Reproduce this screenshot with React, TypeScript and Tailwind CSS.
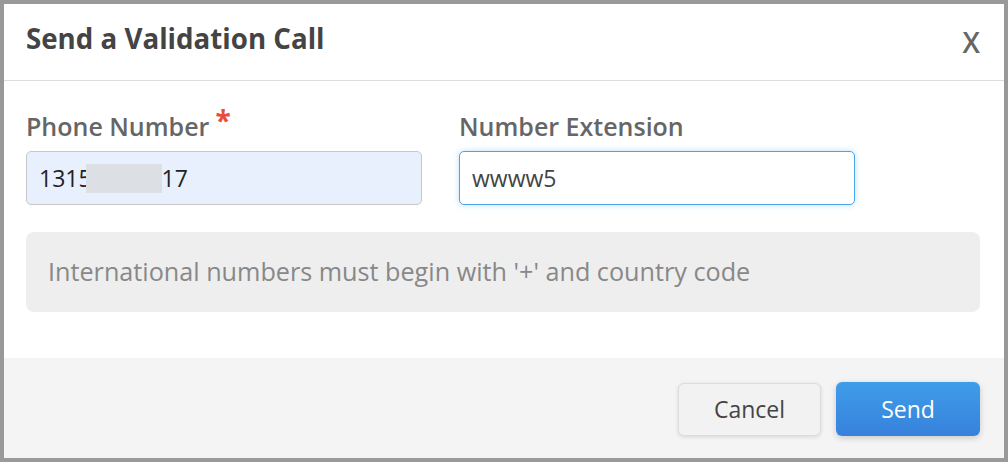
export default function App() {
  const font = { fontFamily: '"Open Sans", "Noto Sans", sans-serif' };
  return (
    <div className="w-[1008px] h-[462px] border-4 border-[#999] bg-white flex flex-col" style={font}>
      <div className="h-[77px] shrink-0 border-b border-[#ddd] flex items-center justify-between pl-[22px] pr-[24px] pb-[6px]">
        <div className="text-[27.7px] font-bold text-[#444] leading-none">Send a Validation Call</div>
        <div className="text-[28px] font-semibold text-[#666] leading-none pt-[6px]">X</div>
      </div>
      <div className="flex-1 bg-white pl-[22px] pr-[24px] pt-[28px]">
        <div className="flex gap-[37px]">
          <div className="w-[396px]">
            <div className="h-[40px] flex items-start text-[25px] font-semibold text-[#666] leading-[34px]">
              Phone Number<span className="text-[#e74c3c] text-[28px] font-bold ml-[6px] leading-[22px]">*</span>
            </div>
            <div className="mt-[2px] h-[54px] rounded-[5px] border border-[#c8c8c8] bg-[#e8f0fe] flex items-center pl-[12px] text-[23px] text-[#222]">
              <span>1315</span>
              <span className="inline-block w-[76px] h-[29px] bg-[#dcdfe4] -ml-[6px]"></span>
              <span>17</span>
            </div>
          </div>
          <div className="w-[396px]">
            <div className="h-[40px] text-[25px] font-semibold text-[#666] leading-[34px]">Number Extension</div>
            <div className="mt-[2px] h-[54px] rounded-[5px] border border-[#4aa3e8] bg-white flex items-center pl-[12px] text-[23px] text-[#444] shadow-[0_0_6px_rgba(74,163,232,0.35)]">
              wwww5
            </div>
          </div>
        </div>
        <div className="mt-[27px] h-[80px] rounded-[8px] bg-[#eeeeee] flex items-center pl-[22px] text-[25.2px] text-[#888]">
          International numbers must begin with '+' and country code
        </div>
      </div>
      <div className="h-[100px] shrink-0 bg-[#f4f4f4] flex items-center justify-end gap-[15px] pr-[24px] pt-[2px]">
        <button className="w-[143px] h-[53px] rounded-[6px] border border-[#dcdcdc] bg-[#f2f2f2] text-[23px] text-[#444] shadow-[0_1px_4px_rgba(0,0,0,0.12)]">Cancel</button>
        <button className="w-[144px] h-[54px] rounded-[6px] bg-gradient-to-b from-[#3e9de9] to-[#3881dc] text-[23px] text-white shadow-[0_2px_6px_rgba(0,0,0,0.18)]">Send</button>
      </div>
    </div>
  );
}
